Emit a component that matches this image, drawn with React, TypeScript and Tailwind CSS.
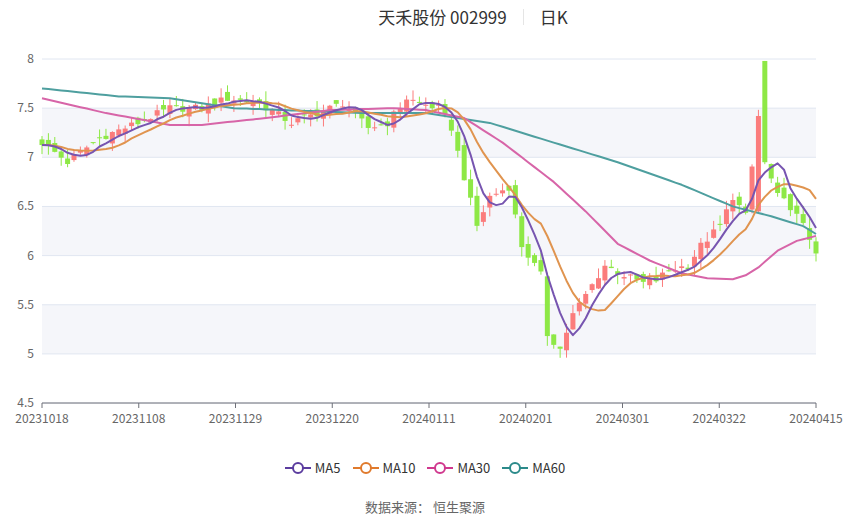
import React from "react";

const X0 = 42, X1 = 816, N = 122;
const xs = (i: number) => X0 + (i * (X1 - X0)) / (N - 1);
const ys = (v: number) => 59 + (8 - v) * 98.3;

function interp(k: [number, number][], i: number) {
  for (let j = 0; j < k.length - 1; j++) {
    const [a, va] = k[j], [b, vb] = k[j + 1];
    if (i >= a && i <= b) return va + ((vb - va) * (i - a)) / (b - a);
  }
  return k[k.length - 1][1];
}
const ck: [number, number][] = [[0,7.15],[4,6.95],[9,7.2],[15,7.35],[20,7.5],[25,7.5],[29,7.6],[34,7.55],[39,7.35],[43,7.45],[47,7.55],[51,7.3],[54,7.35],[57,7.6],[59,7.55],[62,7.5],[64,7.3],[66,6.8],[68,6.3],[70,6.6],[73,6.7],[75,6.1],[78,5.8],[79,5.2],[81,5.05],[83,5.4],[85,5.6],[88,5.9],[91,5.8],[94,5.72],[96,5.75],[98,5.85],[101,5.9],[103,6.1],[106,6.3],[108,6.6],[110,6.4],[112,7.4],[113,6.95],[115,6.6],[117,6.5],[119,6.3],[121,6.05]];
const m30k: [number, number][] = [[0,7.6],[10,7.45],[20,7.33],[25,7.33],[35,7.4],[45,7.48],[55,7.5],[60,7.48],[66,7.4],[72,7.15],[80,6.75],[85,6.45],[90,6.12],[95,5.95],[100,5.82],[104,5.77],[108,5.76],[110,5.8],[112,5.88],[115,6.05],[118,6.15],[121,6.2]];
const m60k: [number, number][] = [[0,7.7],[12,7.62],[20,7.6],[30,7.5],[50,7.45],[60,7.45],[70,7.35],[80,7.15],[90,6.95],[100,6.72],[108,6.5],[114,6.4],[119,6.3],[121,6.22]];

const rnd = (i: number) => { const s = Math.sin(i * 12.9898 + 78.233) * 43758.5453; return s - Math.floor(s) - 0.5; };
const closes = Array.from({ length: N }, (_, i) => interp(ck, i) + rnd(i) * 0.08);
const candles = closes.map((c, i) => {
  let o = (i ? closes[i - 1] : c + 0.05) + rnd(i + 300) * 0.12;
  let cl = c;
  if (i === 113) { o = 7.98; cl = 6.95; }
  if (i === 112) { o = 6.45; cl = 7.42; }
  const hi = Math.max(o, cl) + Math.abs(rnd(i + 500)) * 0.2;
  const lo = Math.min(o, cl) - Math.abs(rnd(i + 700)) * 0.2;
  return { o, c: cl, hi: i === 113 ? 7.98 : hi, lo };
});
const ma = (n: number) => closes.map((_, i) => { let s = 0; for (let k = 0; k < n; k++) s += closes[Math.max(0, i - k)]; return s / n; });
const pts = (v: number[]) => v.map((y, i) => `${xs(i).toFixed(1)},${ys(y).toFixed(1)}`).join(" ");
const ma5 = ma(5), ma10 = ma(10);
const ma30 = Array.from({ length: N }, (_, i) => interp(m30k, i));
const ma60 = Array.from({ length: N }, (_, i) => interp(m60k, i));

const dates = ["20231018","20231108","20231129","20231220","20240111","20240201","20240301","20240322","20240415"];
const legend = [["MA5","#5b3c9f"],["MA10","#e07a2c"],["MA30","#d0388e"],["MA60","#2b8a8a"]];

export default function App() {
  return (
    <div className="relative w-[850px] h-[517px] bg-white" style={{ fontFamily: '"Noto Sans CJK SC", "Noto Sans", sans-serif' }}>
      <div className="absolute top-[4px] left-0 w-full flex justify-center items-center text-[17px] text-[#333]">
        <span className="ml-[96px]">天禾股份 002999</span>
        <span className="mx-[16px] h-[16px] w-px bg-[#e5e5e5]" />
        <span>日K</span>
      </div>
      <svg className="absolute left-0 top-0" width="850" height="440">
        {[[7.5,7],[6.5,6],[5.5,5]].map(([a,b]) => <rect key={a} x={X0} y={ys(a)} width={X1-X0} height={ys(b)-ys(a)} fill="#f5f6fa" />)}
        {[8,7.5,7,6.5,6,5.5,5,4.5].map(v => (
          <g key={v}>
            <line x1={X0} x2={X1} y1={ys(v)} y2={ys(v)} stroke="#e0e6f1" />
            <text x={34} y={ys(v)+4} textAnchor="end" fontSize="12" fill="#666">{v}</text>
          </g>
        ))}
        {dates.map((d, i) => (
          <g key={d}>
            <line x1={X0 + i*96.75} x2={X0 + i*96.75} y1={403} y2={408} stroke="#6e7079" />
            <text x={X0 + i*96.75} y={423} textAnchor="middle" fontSize="12" fill="#666">{d}</text>
          </g>
        ))}
        <line x1={X0} x2={X1} y1={403} y2={403} stroke="#6e7079" />
        {candles.map((k, i) => {
          const up = k.c >= k.o; const col = up ? "#fb7c7c" : "#8ee846";
          const top = ys(Math.max(k.o, k.c)), bot = ys(Math.min(k.o, k.c));
          return (
            <g key={i}>
              <line x1={xs(i)} x2={xs(i)} y1={ys(k.hi)} y2={ys(k.lo)} stroke={col} />
              <rect x={xs(i)-2.5} y={top} width={5} height={Math.max(1, bot-top)} fill={col} />
            </g>
          );
        })}
        <polyline points={pts(ma60)} fill="none" stroke="#4e9f9f" strokeWidth="2" strokeLinejoin="round" />
        <polyline points={pts(ma30)} fill="none" stroke="#d765a8" strokeWidth="2" strokeLinejoin="round" />
        <polyline points={pts(ma10)} fill="none" stroke="#e0944f" strokeWidth="2" strokeLinejoin="round" />
        <polyline points={pts(ma5)} fill="none" stroke="#7755b0" strokeWidth="2" strokeLinejoin="round" />
      </svg>
      <div className="absolute top-[458px] left-0 w-full flex justify-center gap-[12px] text-[13px] text-[#333]">
        {legend.map(([n, c]) => (
          <div key={n} className="flex items-center gap-[4px]">
            <svg width="26" height="14"><line x1="0" x2="26" y1="7" y2="7" stroke={c} strokeWidth="2" /><circle cx="13" cy="7" r="5" fill="#fff" stroke={c} strokeWidth="2" /></svg>
            <span>{n}</span>
          </div>
        ))}
      </div>
      <div className="absolute top-[497px] left-0 w-full text-center text-[13px] text-[#666]">数据来源：&nbsp;恒生聚源</div>
    </div>
  );
}
